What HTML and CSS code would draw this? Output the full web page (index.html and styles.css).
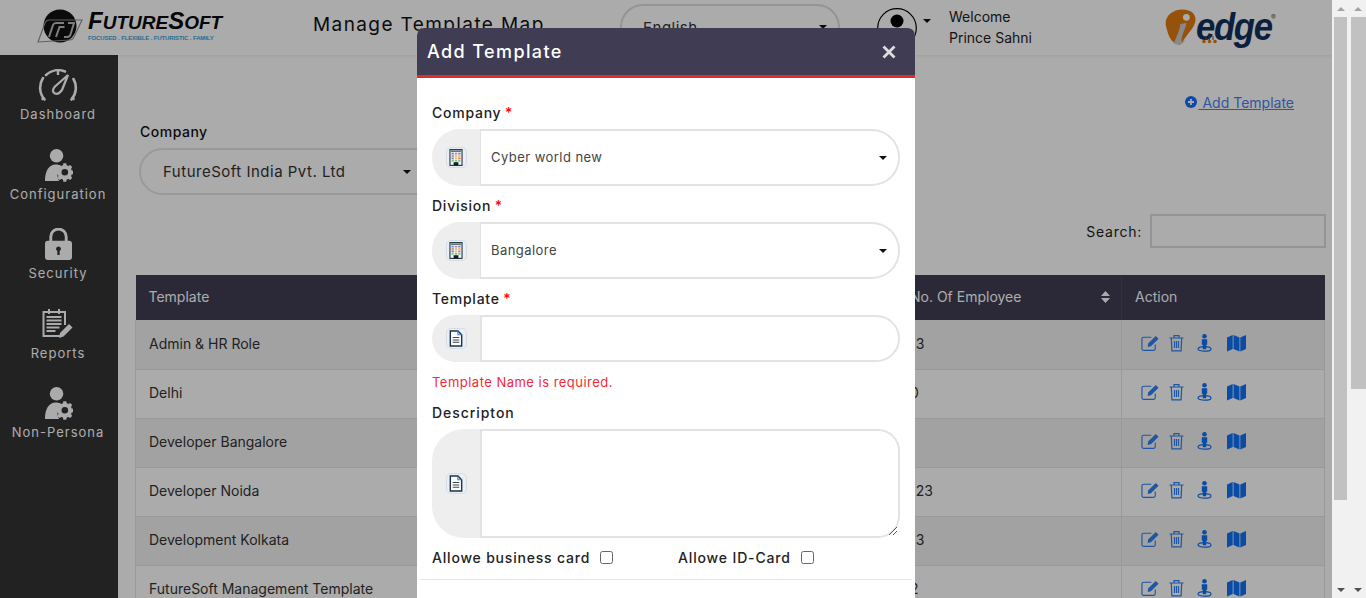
FILE: index.html
```html
<!DOCTYPE html>
<html lang="en">
<head>
<meta charset="utf-8">
<title>Manage Template Map</title>
<link rel="stylesheet" href="styles.css">
</head>
<body>
<svg class="defs" width="0" height="0" aria-hidden="true">
  <defs>
    <symbol id="i-persona" viewBox="0 0 30 34">
      <circle cx="13" cy="7" r="7"/>
      <path d="M1 33c0-10 4-17 11-17 2.500 0 4.500.6 6 2-4 2.500-5.500 9-2.500 15z"/>
      <path fill-rule="evenodd" d="M22 17.500h3l.5 2.200 1.700.8 2-1.100 2 2.100-1.100 2 .7 1.700 2.200.6v3l-2.200.6-.7 1.700 1.100 2-2 2.100-2-1.100-1.700.7-.5 2.200h-3l-.5-2.200-1.700-.7-2 1.100-2.100-2.100 1.100-2-.7-1.700-2.200-.6v-3l2.200-.6.7-1.700-1.100-2 2.100-2.100 2 1.100 1.700-.8zM23.500 23.500a3.500 3.500 0 1 0 0 7 3.500 3.500 0 0 0 0-7z" transform="translate(-1.500 -2.500) scale(.98)"/>
    </symbol>
    <symbol id="i-building" viewBox="0 0 14 18">
      <rect x=".6" y=".6" width="12.800" height="16.800" fill="#eef1f4" stroke="#2b3a44" stroke-width="1.200"/>
      <rect x="1.500" y="1.500" width="11" height="1.700" fill="#5c7585"/>
      <g fill="#4f95dc"><rect x="2.300" y="4" width="2.400" height="1.800"/><rect x="9.300" y="4" width="2.400" height="1.800"/><rect x="2.300" y="9" width="2.400" height="1.800"/></g>
      <g fill="#e37a76"><rect x="5.800" y="4" width="2.400" height="1.800"/><rect x="2.300" y="6.500" width="2.400" height="1.800"/><rect x="9.300" y="9" width="2.400" height="1.800"/></g>
      <g fill="#f3b765"><rect x="5.800" y="6.500" width="2.400" height="1.800"/><rect x="9.300" y="6.500" width="2.400" height="1.800"/><rect x="5.800" y="9" width="2.400" height="1.800"/></g>
      <g fill="#7cc480"><rect x="2.300" y="11.500" width="2.400" height="1.800"/><rect x="5.800" y="11.500" width="2.400" height="1.800"/><rect x="9.300" y="11.500" width="2.400" height="1.800"/></g>
      <rect x="4.500" y="14" width="5" height="3.400" fill="#111b24"/>
    </symbol>
    <symbol id="i-doc" viewBox="0 0 14 18">
      <path d="M1 1h8l4 4v12H1z" fill="#fff" stroke="#1c3345" stroke-width="1.500"/>
      <path d="M9 1v4h4" fill="none" stroke="#2f7fc4" stroke-width="1.100"/>
      <path d="M3.500 8h7M3.500 10.500h7M3.500 13h7" stroke="#37474f" stroke-width="1.100"/>
    </symbol>
    <symbol id="a-edit" viewBox="0 0 20 18">
      <path d="M15 10.500V15a1.800 1.800 0 0 1-1.800 1.800H2.800A1.800 1.800 0 0 1 1 15V4.800A1.800 1.800 0 0 1 2.800 3h8" fill="none" stroke="currentColor" stroke-width="1.200"/>
      <path d="M7.500 9.500 15.500 1.500l3 3-8 8-3.500.6z" fill="currentColor"/>
    </symbol>
    <symbol id="a-trash" viewBox="0 0 15 17">
      <path d="M.5 3.500h14M5 3.500V1.200h5v2.300M2.300 3.500l.6 12.800h9.200l.6-12.800M5.500 6.500v7M7.500 6.500v7M9.500 6.500v7" fill="none" stroke="currentColor" stroke-width="1.200"/>
    </symbol>
    <symbol id="a-street" viewBox="0 0 15 18">
      <circle cx="7.500" cy="2.300" r="2.300" fill="currentColor"/>
      <path d="M4.800 5.200h5.400v5.600H9.200v4.400H5.800v-4.400H4.800z" fill="currentColor"/>
      <ellipse cx="7.500" cy="14.900" rx="6.500" ry="2.300" fill="none" stroke="currentColor" stroke-width="1.200"/>
    </symbol>
    <symbol id="a-map" viewBox="0 0 19 18">
      <path d="M0 3.500 5.700 1v14L0 17.500zM6.500 1l6 2.500v14l-6-2.500zM13.300 3.500 19 1v14l-5.700 2.500z" fill="currentColor"/>
    </symbol>
  </defs>
</svg>

<div class="screen">
  <div class="app">
    <header class="topbar">
      <div class="logo-fs">
        <svg class="logo-fs-mark" viewBox="0 0 48 36" aria-hidden="true">
          <circle cx="24" cy="17" r="16.500" fill="#111"/>
          <path d="M2 33 9 14c1-2 2-3 4-3h33l-8 17c-1 2-2 3-4 3z" fill="none" stroke="#8f8f8f" stroke-width="1.100"/>
          <path d="M13 28l4-12c.6-1.500 1.500-2 3-2h8M20 28l3.500-10h5M28 28h3c2 0 3-1 3.500-2.500L38 14h-6" fill="none" stroke="#bdbdbd" stroke-width="2"/>
        </svg>
        <div class="logo-fs-words">
          <span class="logo-fs-name"><span class="big">F</span>UTURE<span class="big">S</span>OFT</span>
          <span class="logo-fs-tag">FOCUSED . FLEXIBLE . FUTURISTIC . FAMILY</span>
        </div>
      </div>
      <h1 class="page-title">Manage Template Map</h1>
      <div class="lang"><span>English</span><i class="caret"></i></div>
      <div class="user">
        <svg class="avatar" viewBox="0 0 40 40" aria-hidden="true">
          <circle cx="20" cy="20" r="19.300" fill="none" stroke="#000" stroke-width="1.200"/>
          <circle cx="20" cy="13" r="6.500" fill="#000"/>
          <path d="M8 34c1-9 6-12 12-12s11 3 12 12z" fill="#000"/>
        </svg>
        <i class="caret caret-user"></i>
      </div>
      <div class="welcome"><span>Welcome</span><span>Prince Sahni</span></div>
      <div class="logo-edge">
        <svg class="logo-edge-i" viewBox="0 0 36 36" aria-hidden="true">
          <path d="M2 17C0 8 8 0 19 0c9 0 15 5 13 13-2 8-9 12-13 21-1 2-4 3-7 1C6 32 4 25 2 17z" fill="#e07a10"/>
          <path d="M10 35c3-7 6-13 7-20l6-1c-1 7-5 12-5 18 0 2 2 1 4-1-2 4-5 5-8 5-1 0-3 0-4-1z" fill="#c9cdd2"/>
          <circle cx="23" cy="8" r="3.500" fill="#fff"/>
        </svg>
        <span class="logo-edge-word">edge</span>
        <span class="logo-edge-r">®</span>
        <svg class="logo-edge-dots" viewBox="0 0 18 8" aria-hidden="true">
          <path d="M6 0v4M9.500 0v4M13 0v4" stroke="#555" stroke-width="1"/>
          <g fill="#e07a10"><circle cx="4" cy="5.500" r="1.800"/><circle cx="9.500" cy="5.500" r="1.800"/><circle cx="15" cy="5.500" r="1.800"/></g>
        </svg>
      </div>
    </header>

    <div class="body">
      <nav class="side">
        <a class="side-item">
          <span class="ico-slot">
            <svg class="ico-dash" viewBox="0 0 40 32" aria-hidden="true">
              <path d="M6.500 30.500A18 18 0 0 1 5 9M8 6A18 18 0 0 1 27 2.500M35.500 10A18 18 0 0 1 33.500 30.500" fill="none" stroke="#fff" stroke-width="2.600" stroke-linecap="round"/>
              <path d="M20 1v5M3.500 30.500l3.500-1.500M36.500 30.500 33 29" stroke="#fff" stroke-width="2.400"/>
              <path d="M30 6 17 17.500c-3 3-2.500 6 0 7 2.500 1 5-.8 7-3.500z" fill="none" stroke="#fff" stroke-width="2.300"/>
            </svg>
          </span>
          <span>Dashboard</span>
        </a>
        <a class="side-item">
          <span class="ico-slot"><svg class="ico-person"><use href="#i-persona"/></svg></span>
          <span>Configuration</span>
        </a>
        <a class="side-item">
          <span class="ico-slot">
            <svg class="ico-lock" viewBox="0 0 28 33" aria-hidden="true">
              <path d="M6 14V9a8 8 0 0 1 16 0v5" fill="none" stroke="#fff" stroke-width="3"/>
              <path fill-rule="evenodd" d="M3 13h22a3 3 0 0 1 3 3v14a3 3 0 0 1-3 3H3a3 3 0 0 1-3-3V16a3 3 0 0 1 3-3zm11 6a2.500 2.500 0 0 0-1.200 4.700V28h2.400v-4.300A2.500 2.500 0 0 0 14 19z" fill="#fff"/>
            </svg>
          </span>
          <span>Security</span>
        </a>
        <a class="side-item">
          <span class="ico-slot">
            <svg class="ico-report" viewBox="0 0 32 30" aria-hidden="true">
              <path d="M19 27H1.500V3H23v13" fill="none" stroke="#fff" stroke-width="2"/>
              <path d="M7 0v5M17 0v5M4.500 8h15M4.500 11.500h15M4.500 15h15M4.500 18.500h13M4.500 22h9" stroke="#fff" stroke-width="2"/>
              <path d="M17 29l1-5 9-9 3.500 3.500-9 9z" fill="#fff"/>
            </svg>
          </span>
          <span>Reports</span>
        </a>
        <a class="side-item">
          <span class="ico-slot"><svg class="ico-person"><use href="#i-persona"/></svg></span>
          <span>Non-Persona</span>
        </a>
      </nav>

      <main class="main">
        <div class="add-row">
          <a class="add-link">
            <svg class="add-ico" viewBox="0 0 12 12" aria-hidden="true">
              <circle cx="6" cy="6" r="6" fill="#1470ff"/>
              <path d="M6 3v6M3 6h6" stroke="#fff" stroke-width="1.800"/>
            </svg>
            <span>&nbsp;Add Template</span>
          </a>
        </div>
        <label class="filter-label">Company</label>
        <div class="filter-select"><span>FutureSoft India Pvt. Ltd</span><i class="caret"></i></div>
        <div class="search-row">
          <label class="search-label">Search:</label>
          <div class="search-input"></div>
        </div>
        <table class="grid">
          <colgroup><col class="c1"><col class="c2"><col class="c3"></colgroup>
          <thead>
            <tr>
              <th>Template</th>
              <th class="th-sort">No. Of Employee
                <svg class="sort" viewBox="0 0 9 12" aria-hidden="true"><path d="M4.500 0 9 5H0zM4.500 12 0 7h9z"/></svg>
              </th>
              <th>Action</th>
            </tr>
          </thead>
          <tbody>
            <tr><td>Admin &amp; HR Role</td><td>13</td><td><div class="acts"><svg class="a1"><use href="#a-edit"/></svg><svg class="a2"><use href="#a-trash"/></svg><svg class="a3"><use href="#a-street"/></svg><svg class="a4"><use href="#a-map"/></svg></div></td></tr>
            <tr><td>Delhi</td><td>0</td><td><div class="acts"><svg class="a1"><use href="#a-edit"/></svg><svg class="a2"><use href="#a-trash"/></svg><svg class="a3"><use href="#a-street"/></svg><svg class="a4"><use href="#a-map"/></svg></div></td></tr>
            <tr><td>Developer Bangalore</td><td></td><td><div class="acts"><svg class="a1"><use href="#a-edit"/></svg><svg class="a2"><use href="#a-trash"/></svg><svg class="a3"><use href="#a-street"/></svg><svg class="a4"><use href="#a-map"/></svg></div></td></tr>
            <tr><td>Developer Noida</td><td>123</td><td><div class="acts"><svg class="a1"><use href="#a-edit"/></svg><svg class="a2"><use href="#a-trash"/></svg><svg class="a3"><use href="#a-street"/></svg><svg class="a4"><use href="#a-map"/></svg></div></td></tr>
            <tr><td>Development Kolkata</td><td>13</td><td><div class="acts"><svg class="a1"><use href="#a-edit"/></svg><svg class="a2"><use href="#a-trash"/></svg><svg class="a3"><use href="#a-street"/></svg><svg class="a4"><use href="#a-map"/></svg></div></td></tr>
            <tr><td>FutureSoft Management Template</td><td>2</td><td><div class="acts"><svg class="a1"><use href="#a-edit"/></svg><svg class="a2"><use href="#a-trash"/></svg><svg class="a3"><use href="#a-street"/></svg><svg class="a4"><use href="#a-map"/></svg></div></td></tr>
          </tbody>
        </table>
      </main>
    </div>

    <div class="backdrop"></div>

    <section class="modal" role="dialog" aria-label="Add Template">
      <header class="modal-head">
        <h2>Add Template</h2>
        <svg class="close" viewBox="0 0 14 14" aria-hidden="true"><path d="M1.500 1.500l11 11M12.500 1.500l-11 11" stroke="#ddd" stroke-width="2.800"/></svg>
      </header>
      <form class="modal-body">
        <label class="f-label">Company <b>*</b></label>
        <div class="group g-select">
          <div class="prepend"><span class="ico-box"><svg class="glyph"><use href="#i-building"/></svg></span></div>
          <div class="control"><span>Cyber world new</span><i class="caret"></i></div>
        </div>
        <label class="f-label">Division <b>*</b></label>
        <div class="group g-select">
          <div class="prepend"><span class="ico-box"><svg class="glyph"><use href="#i-building"/></svg></span></div>
          <div class="control"><span>Bangalore</span><i class="caret"></i></div>
        </div>
        <label class="f-label">Template <b>*</b></label>
        <div class="group g-input">
          <div class="prepend"><span class="ico-box"><svg class="glyph"><use href="#i-doc"/></svg></span></div>
          <div class="control control-text"></div>
        </div>
        <p class="err">Template Name is required.</p>
        <label class="f-label f-desc">Descripton</label>
        <div class="group g-area">
          <div class="prepend"><span class="ico-box"><svg class="glyph"><use href="#i-doc"/></svg></span></div>
          <div class="control control-area">
            <svg class="grip" viewBox="0 0 9 9" aria-hidden="true"><path d="M9 1 1 9M9 5 5 9" stroke="#555" stroke-width="1"/></svg>
          </div>
        </div>
        <div class="checks">
          <label class="chk chk-a">Allowe business card <i class="box"></i></label>
          <label class="chk chk-b">Allowe ID-Card <i class="box"></i></label>
        </div>
        <hr class="foot-line">
      </form>
    </section>
  </div>

  <aside class="bars">
    <div class="bar bar-a"><i class="up"></i><div class="thumb"></div><i class="down"></i></div>
    <div class="bar bar-b"><i class="up"></i><div class="thumb"></div><i class="down"></i></div>
  </aside>
</div>
</body>
</html>
```
FILE: styles.css
```css
* { box-sizing: border-box; }
html, body { margin: 0; height: 100%; overflow: hidden; }
body { font-family: Inter, "Liberation Sans", sans-serif; color: #212529; background: #fff; }
.defs { position: absolute; }
i { display: block; font-style: normal; }

.screen { display: flex; width: 1366px; height: 598px; }
.app { position: relative; width: 1332px; height: 598px; overflow: hidden; background: #fff; display: flex; flex-direction: column; }

/* top bar */
.topbar { flex: none; height: 55px; display: flex; align-items: flex-start; background: #fff; box-shadow: 0 1px 3px rgba(0,0,0,.08); position: relative; }
.logo-fs { width: 313px; padding: 9px 0 0 36px; display: flex; align-items: flex-start; }
.logo-fs-mark { width: 48px; height: 36px; flex: none; }
.logo-fs-words { display: flex; flex-direction: column; margin-left: 4px; }
.logo-fs-name { font: italic 700 19px/24px "Liberation Sans", sans-serif; color: #0a0a0a; letter-spacing: 0; white-space: nowrap; }
.logo-fs-name .big { font-size: 24px; line-height: 24px; }
.logo-fs-tag { font: 700 6px/8px "Liberation Sans", sans-serif; color: #3fa3d8; white-space: nowrap; margin-top: -1px; letter-spacing: -.12px; }
.page-title { width: 307px; margin: 0; padding-top: 13px; font-size: 19px; line-height: 24px; font-weight: 400; letter-spacing: 1.4px; color: #111; white-space: nowrap; }
.lang { width: 220px; height: 46px; margin-top: 4px; border: 2px solid #ddd; border-radius: 23px; display: flex; align-items: center; justify-content: space-between; padding: 0 11px 0 21px; font-size: 15px; letter-spacing: .5px; color: #333; }
.caret { width: 0; height: 0; border-left: 4px solid transparent; border-right: 4px solid transparent; border-top: 4px solid #111; }
.user { margin: 8px 0 0 37px; display: flex; align-items: flex-start; width: 72px; }
.avatar { width: 40px; height: 40px; flex: none; }
.caret-user { margin: 11px 0 0 6px; }
.welcome { width: 215px; display: flex; flex-direction: column; font-size: 14px; line-height: 21px; padding-top: 6px; color: #222; }
.logo-edge { position: relative; display: flex; align-items: flex-start; padding-top: 9px; }
.logo-edge-i { width: 35px; height: 36px; flex: none; }
.logo-edge-word { font: italic 700 39px/36px "Liberation Sans", sans-serif; color: #13315c; letter-spacing: -1.500px; margin-left: -3px; width: 73px; transform: scaleX(.89); transform-origin: left center; }
.logo-edge-r { font-size: 7px; line-height: 10px; color: #555; margin-left: 2px; margin-top: 4px; }
.logo-edge-dots { position: absolute; left: 36px; top: 36px; width: 18px; height: 8px; }

/* layout */
.body { flex: 1; display: flex; min-height: 0; }
.side { flex: none; width: 118px; background: #333; display: flex; flex-direction: column; align-items: center; padding: 9px 2px 0 0; }
.side-item { display: flex; flex-direction: column; align-items: center; color: #fff; font-size: 13px; line-height: 16px; letter-spacing: 1px; height: 79px; }
.side-item:nth-child(odd) { height: 80px; }
.ico-slot { display: flex; height: 42px; align-items: center; justify-content: center; }
.ico-dash { display: block; width: 40px; height: 32px; }
.ico-person { display: block; width: 29px; height: 33px; fill: #fff; margin-left: 1px; }
.ico-lock { display: block; width: 27px; height: 32px; }
.ico-report { display: block; width: 32px; height: 30px; }

/* main */
.main { flex: 1; min-width: 0; padding: 0 6px 0 18px; }
.add-row { height: 66px; display: flex; justify-content: flex-end; padding: 38px 32px 0 0; }
.add-link { display: flex; align-items: center; height: 18px; gap: 2px; color: #4a7ff0; font-size: 14px; text-decoration: underline; }
.add-ico { width: 12px; height: 12px; }
.filter-label { display: block; margin-left: 4px; font-size: 14px; line-height: 22px; font-weight: 500; letter-spacing: .5px; color: #111; }
.filter-select { width: 320px; height: 47px; margin-left: 3px; margin-top: 5px; border: 2px solid #e4e4e4; border-radius: 24px; display: flex; align-items: center; justify-content: space-between; padding: 0 46px 0 22px; font-size: 15px; letter-spacing: .5px; color: #333; }
.search-row { display: flex; justify-content: flex-end; align-items: center; gap: 8px; margin-top: 19px; height: 34px; }
.search-label { font-size: 14px; letter-spacing: .75px; color: #222; }
.search-input { width: 176px; height: 34px; border: 2px solid #ddd; }

/* table */
.grid { margin: 27px 0 0 -1px; width: 1189px; table-layout: fixed; border-collapse: collapse; font-size: 14px; color: #333; }
.c1 { width: 761px; } .c2 { width: 225px; } .c3 { width: 203px; }
.grid th { height: 45px; background: #403c54; color: #fff; text-align: left; font-weight: 400; padding: 0 13px 2px; position: relative; }
.grid td { height: 49px; padding: 0 13px 2px; border: 1px solid #e4e4e4; border-top: 0; }
.grid th + th { border-left: 1px solid #4a4660; }
.grid tbody tr:nth-child(odd) td { background: #f2f2f2; }
.sort { width: 9px; height: 12px; fill: #fff; position: absolute; right: 11px; top: 16px; }
.acts { display: flex; align-items: center; color: #1070f5; padding-left: 6px; margin-top: -1px; }
.acts svg { display: block; height: 18px; }
.a1 { width: 19px; color: #2f80f0; } .a2 { width: 15px; margin-left: 9px; color: #2f80f0; } .a3 { width: 15px; margin-left: 13px; } .a4 { width: 19px; margin-left: 15px; }

/* modal */
.backdrop { position: absolute; inset: 0; background: rgba(0,0,0,.33); }
.modal { position: absolute; left: 417px; top: 28px; width: 498px; height: 600px; background: #fff; border-radius: 7px 7px 0 0; }
.modal-head { height: 50px; background: #403c54; border-bottom: 3px solid #e12b2b; border-radius: 7px 7px 0 0; display: flex; align-items: center; justify-content: space-between; padding: 0 19px 0 10px; }
.modal-head h2 { margin: 0; font-size: 18px; line-height: 24px; font-weight: 500; letter-spacing: 1.4px; color: #fff; }
.close { width: 14px; height: 14px; }
.modal-body { padding: 24px 15px 0; }
.f-label { display: block; font-size: 14px; line-height: 21px; font-weight: 500; letter-spacing: .75px; color: #222; height: 27px; }
.f-label b { color: #f00; font-weight: 500; margin-left: -1px; }
.group { display: flex; width: 468px; }
.g-select { height: 57px; margin-bottom: 9px; }
.g-input { height: 47px; }
.g-area { height: 109px; }
.prepend { flex: none; width: 48px; display: flex; align-items: center; justify-content: center; background: #eee; border-radius: 28px 0 0 28px; }
.g-area .prepend { border-radius: 32px 0 0 32px; }
.ico-box { width: 21px; height: 21px; background: #e9eff5; border: 1px solid #d5dee6; border-radius: 5px; display: flex; align-items: center; justify-content: center; }
.glyph { width: 14px; height: 17px; display: block; }
.control { flex: 1; border: 2px solid #e3e3e3; border-radius: 0 28px 28px 0; display: flex; align-items: center; justify-content: space-between; padding: 0 11px 2px 10px; font-size: 13px; letter-spacing: .45px; color: #444; }
.control .caret { margin-top: 2px; }
.control-text { border-radius: 0 24px 24px 0; }
.control-area { border-radius: 0 22px 22px 0; position: relative; }
.g-select .control { border-left-width: 1px; }
.grip { position: absolute; right: 1px; bottom: 1px; width: 9px; height: 9px; }
.err { margin: 0; padding-top: 10px; height: 43px; font-size: 13px; line-height: 20px; letter-spacing: .48px; color: #f52a35; }
.f-label.f-desc { height: 27px; margin-top: -3px; letter-spacing: .95px; }
.checks { display: flex; align-items: center; height: 41px; padding-bottom: 3px; font-size: 14px; font-weight: 500; letter-spacing: .85px; color: #222; }
.chk { display: flex; align-items: center; gap: 10px; }
.chk-a { width: 246px; letter-spacing: .8px; }
.box { width: 13px; height: 13px; background: #fff; border: 1px solid #666; border-radius: 2.500px; }
.foot-line { margin: 0 -12px; border: 0; border-top: 1px solid #e5e5e5; }

/* scrollbars */
.bars { flex: none; width: 34px; display: flex; background: #fff; }
.bar { position: relative; width: 17px; height: 598px; background: #f1f1f1; display: flex; flex-direction: column; align-items: center; }
.thumb { background: #c1c1c1; }
.bar-a .thumb { width: 13px; height: 483px; }
.bar-b .thumb { width: 15px; height: 372px; margin-left: 2px; }
.up, .down { width: 0; height: 0; border-left: 4px solid transparent; border-right: 4px solid transparent; }
.up { border-bottom: 4px solid #a3a3a3; margin: 7px 0 6px; }
.down { border-top: 4px solid #505050; position: absolute; bottom: 6px; }
```
